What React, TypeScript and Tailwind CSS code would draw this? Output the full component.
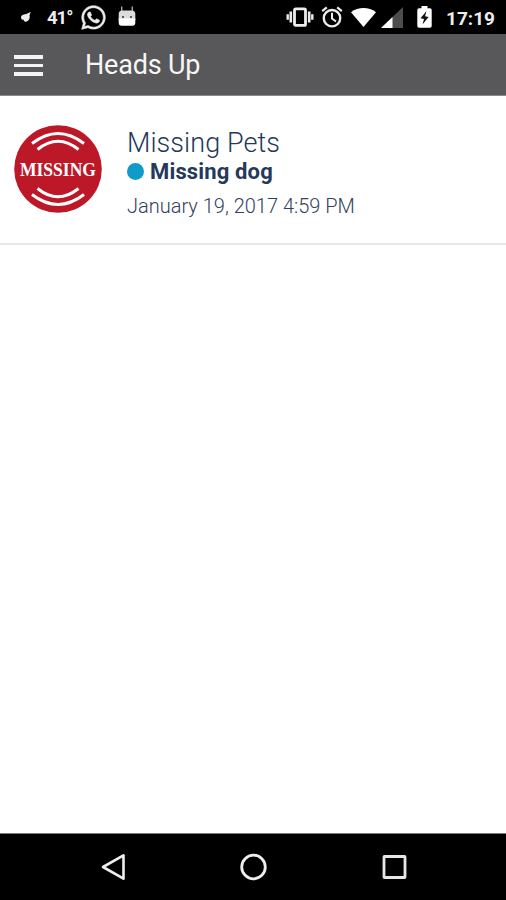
import React from 'react'
import { FaWhatsapp } from 'react-icons/fa'

type Alert = {
  id: number
  category: string
  title: string
  date: string
}

const alerts: Alert[] = [
  { id: 1, category: 'Missing Pets', title: 'Missing dog', date: 'January 19, 2017 4:59 PM' },
]

export default function App() {
  return (
    <div className="flex h-[900px] w-[506px] flex-col overflow-hidden bg-white font-['Roboto','Noto_Sans',sans-serif]">
      <StatusBar />
      <header className="flex h-[62px] shrink-0 items-center border-b border-[#8b8b8c] bg-[#58585a] pl-[14px]">
        <button aria-label="Menu" className="flex w-[29px] flex-col gap-[5px] pt-[2px]">
          <span className="h-[3.5px] w-full bg-[#f4f4f4]" />
          <span className="h-[3.5px] w-full bg-[#f4f4f4]" />
          <span className="h-[3.5px] w-full bg-[#f4f4f4]" />
        </button>
        <h1 className="ml-[42px] text-[27px] leading-8 tracking-[-0.2px] text-[#f7f7f7]">Heads Up</h1>
      </header>

      <main className="flex-1">
        {alerts.map((alert) => (
          <AlertRow key={alert.id} alert={alert} />
        ))}
      </main>

      <NavBar />
    </div>
  )
}

function StatusBar() {
  return (
    <div className="flex h-[34px] shrink-0 items-center bg-black text-[#ededed]">
      <svg className="ml-[20px] h-[12px] w-[12px]" viewBox="0 0 12 12" fill="currentColor">
        <path d="M1 6.500C1 4 3.500 3.200 5.500 3.200L10.800 1 9.500 4.300C10.400 7 8.500 11 5.500 10.800 4 10.500 3.800 9.300 3.700 8.800 2.200 8.800 1 8 1 6.500Z" />
      </svg>
      <span className="ml-[15px] w-[27px] whitespace-nowrap pt-[2px] text-[18.5px] font-bold leading-5 tracking-[-1px]">41°</span>
      <FaWhatsapp className="ml-[6px] h-[27px] w-[27px] stroke-current stroke-[12px]" />
      <svg className="ml-[11px] h-[22px] w-[18px]" viewBox="0 0 18 22" fill="none">
        <path d="M3.700 .5v6M14.300 .5v6" stroke="#a8a8a8" strokeWidth="1.400" />
        <path d="M.7 14V8Q.7 4.500 4.200 4.500h9.600q3.500 0 3.500 3.500v6Z" fill="#dcdcdc" />
        <path d="M.7 12.500h16.600V16.700a3 3 0 0 1-3 3H3.700a3 3 0 0 1-3-3Z" fill="#fff" />
        <circle cx="5" cy="11" r="1" fill="#333" />
        <circle cx="13" cy="11" r="1" fill="#333" />
      </svg>

      {/* vibrate */}
      <svg className="ml-auto h-[20px] w-[28px]" viewBox="0 0 28 20" fill="none" stroke="currentColor">
        <rect x="8.500" y="1.800" width="11" height="16.600" rx="1.200" strokeWidth="2.800" />
        <path d="M4.800 4.500v11M23.200 4.500v11" strokeWidth="2.600" />
        <path d="M1.700 7.300v5.400M26.300 7.300v5.400" strokeWidth="2.400" />
      </svg>
      {/* alarm */}
      <svg className="ml-[7px] h-[22px] w-[22px]" viewBox="0 0 22 22" fill="none" stroke="currentColor">
        <circle cx="11" cy="12.200" r="8.200" strokeWidth="2.400" />
        <path d="M1.200 5.200 5.800 1.400M20.800 5.200 16.200 1.400" strokeWidth="2.200" />
        <path d="M11 6.800v5.700l4 3" strokeWidth="2" />
      </svg>
      <svg className="ml-[8px] h-[20px] w-[25px]" viewBox="0 0 25 20" fill="#fff">
        <path d="M0 5.200C7.500-.3 17.500-.3 25 5.200L12.500 20Z" />
      </svg>
      <svg className="ml-[5px] h-[21px] w-[22px]" viewBox="0 0 22 21">
        <path d="M22 0v21H0Z" fill="#4d4d4d" />
        <path d="M11.500 10.020V21H0Z" fill="#fff" />
      </svg>
      <svg className="ml-[14px] h-[22px] w-[15px]" viewBox="0 0 15 22">
        <path d="M4.500 0h6v2.200H13a1.700 1.700 0 0 1 1.700 1.700v16.100A1.700 1.700 0 0 1 13 21.700H2A1.700 1.700 0 0 1 .3 20V3.900A1.700 1.700 0 0 1 2 2.200h2.500Z" fill="#fff" />
        <path d="M9.500 5 3.500 12.300 7 13l-1.500 5.500L11.600 11 8 10.200Z" fill="#111" />
      </svg>
      <span className="ml-[14px] mr-[10px] w-[50px] whitespace-nowrap pt-[3px] text-[19px] font-bold leading-5">17:19</span>
    </div>
  )
}

function AlertRow({ alert }: { alert: Alert }) {
  return (
    <article className="flex h-[149px] border-b-2 border-[#e7e7e7] pl-[14px] text-[#25395a]">
      <MissingBadge />
      <div className="ml-[25px] pt-[31px]">
        <h2 className="whitespace-nowrap text-[27px] font-light leading-8 tracking-[0.08px] text-[#253858]">{alert.category}</h2>
        <div className="flex h-[26px] items-center">
          <span className="mb-[2px] h-[17px] w-[17px] rounded-full bg-[#109ac7]" />
          <p className="ml-[6px] whitespace-nowrap text-[22px] font-bold leading-[26px] tracking-[0.15px]">{alert.title}</p>
        </div>
        <p className="mt-[9px] whitespace-nowrap text-[20px] font-light leading-6 text-[#34415c]">{alert.date}</p>
      </div>
    </article>
  )
}

function MissingBadge() {
  return (
    <svg className="mt-[29px] h-[88px] w-[88px] shrink-0 overflow-visible" viewBox="0 0 88 88">
      <circle cx="44" cy="44" r="43.800" fill="#bd1828" />
      <g fill="none" stroke="#fff" strokeWidth="2.900">
        <path d="M18 18.500Q44-1.500 70 18.500" />
        <path d="M23.500 24.500Q44 8 64.500 24.500" />
        <path d="M18 69.500Q44 89.500 70 69.500" />
        <path d="M23.500 63.500Q44 80 64.500 63.500" />
      </g>
      <text
        x="44"
        y="50.500"
        textAnchor="middle"
        textLength="76"
        lengthAdjust="spacingAndGlyphs"
        className="fill-white font-['Liberation_Serif',serif] text-[19px] font-bold"
      >
        MISSING
      </text>
    </svg>
  )
}

function NavBar() {
  return (
    <nav className="flex h-[67px] shrink-0 items-center border-t border-[#777] bg-black pl-[100px]">
      <button aria-label="Back">
        <svg className="h-[28px] w-[28px]" viewBox="0 0 28 28" fill="none" stroke="#eee" strokeWidth="2.600" strokeLinejoin="round">
          <path d="M23.500 2.300v23.400L3 14Z" />
        </svg>
      </button>
      <button aria-label="Home" className="ml-[111px]">
        <svg className="h-[28px] w-[28px]" viewBox="0 0 28 28" fill="none" stroke="#eee" strokeWidth="2.800">
          <circle cx="14.500" cy="14" r="11.800" />
        </svg>
      </button>
      <button aria-label="Recent apps" className="ml-[113px]">
        <svg className="h-[28px] w-[28px]" viewBox="0 0 28 28" fill="none" stroke="#e6e6e6" strokeWidth="2.800" strokeLinejoin="round">
          <rect x="4" y="3.500" width="21" height="21" rx="0.500" />
        </svg>
      </button>
    </nav>
  )
}
